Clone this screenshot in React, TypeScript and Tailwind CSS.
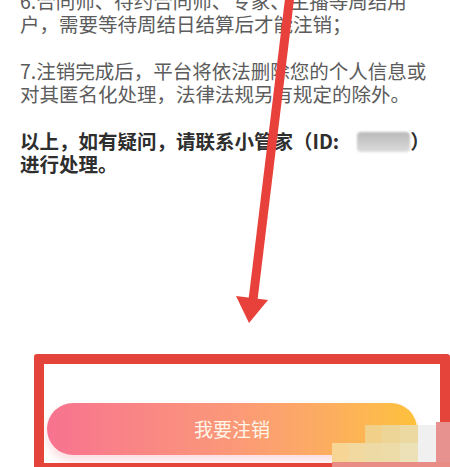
import React from 'react';

const font = { fontFamily: '"Noto Sans CJK SC", "Noto Sans", sans-serif' };

// mosaic blocks covering the bottom-right corner of the screenshot
const mosaic = [
  { x: 365, y: 425, w: 17, h: 18, c: 'bg-[#f1d08a]' },
  { x: 382, y: 425, w: 18, h: 18, c: 'bg-[#ecd596]' },
  { x: 400, y: 425, w: 18, h: 18, c: 'bg-[#ecd9a2]' },
  { x: 418, y: 425, w: 18, h: 18, c: 'bg-[#f0f0f0]' },
  { x: 332, y: 443, w: 17, h: 19, c: 'bg-[#f7d594]' },
  { x: 349, y: 443, w: 16, h: 19, c: 'bg-[#f1d9a0]' },
  { x: 365, y: 443, w: 17, h: 19, c: 'bg-[#eedaa4]' },
  { x: 382, y: 443, w: 18, h: 19, c: 'bg-[#eedca8]' },
  { x: 400, y: 443, w: 18, h: 19, c: 'bg-[#ede1b8]' },
  { x: 418, y: 443, w: 18, h: 19, c: 'bg-[#f0f0f0]' },
  { x: 332, y: 462, w: 118, h: 5, c: 'bg-[#ea8c86]' },
  { x: 436, y: 422, w: 14, h: 40, c: 'bg-[#e7928e]' },
];

function App() {
  return (
    <div className="relative w-[450px] h-[467px] overflow-hidden bg-white flex flex-col justify-between" style={font}>
      <div className="pl-5 pr-[10px] -mt-[11px] text-[19.5px] leading-[23px] flex flex-col gap-6">
        <p className="text-[#5c5c5c]">
          6.合同师、待约合同师、专家、主播等周结用户，需要等待周结日结算后才能注销；
        </p>
        <p className="text-[#5c5c5c]">
          7.注销完成后，平台将依法删除您的个人信息或对其匿名化处理，法律法规另有规定的除外。
        </p>
        <p className="font-bold text-[#2e2e2e]">
          以上，如有疑问，请联系小管家（ID:
          <span className="inline-block align-middle ml-[18px] w-[53px] h-[20px] rounded-[4px] bg-gradient-to-b from-[#b9b9b9] to-[#dcdcdc] blur-[1px] -mt-[3px]" />
          ）进行处理。
        </p>
      </div>

      <div className="px-[47px] pr-[33px] pb-[12px]">
        <button className="w-full h-[52px] rounded-full bg-gradient-to-r from-[#f7728f] via-[#fb9878] to-[#fdc13a] text-[#fff6ea] text-[19px] shadow-[0_6px_10px_rgba(247,120,130,0.25)]">
          我要注销
        </button>
      </div>

      {/* annotation: red arrow */}
      <svg className="absolute left-0 top-0 pointer-events-none" width="450" height="467">
        <line x1="290" y1="-5" x2="253" y2="300" stroke="#e8403a" strokeWidth="9" />
        <polygon points="236,296 268,300 249,323" fill="#e8403a" />
      </svg>

      {/* annotation: red box */}
      <div className="absolute left-[34px] top-[354px] w-[416px] h-[119px] border-[10px] border-[#e5443a] rounded-[3px] pointer-events-none" />

      {mosaic.map((m, i) => (
        <div
          key={i}
          className={`absolute ${m.c}`}
          style={{ left: m.x, top: m.y, width: m.w, height: m.h }}
        />
      ))}
    </div>
  );
}

export default App;
